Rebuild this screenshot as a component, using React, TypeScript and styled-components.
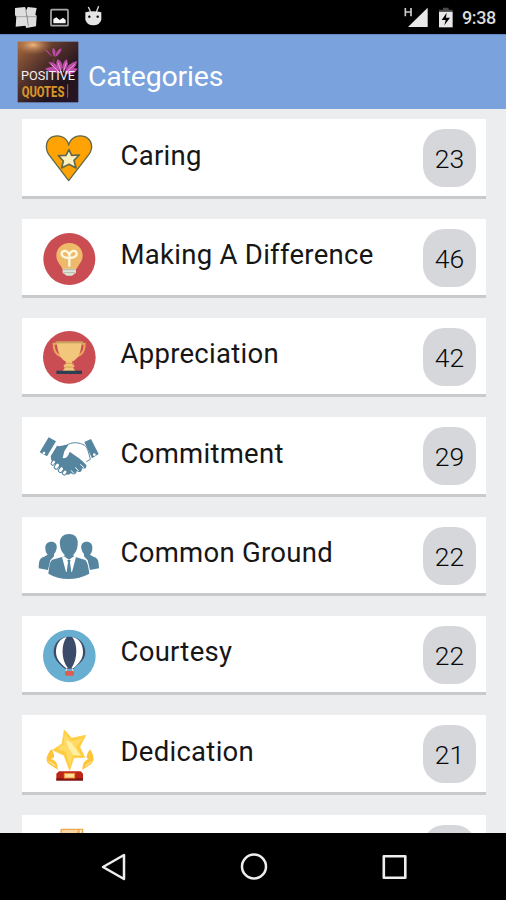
import React from "react";
import styled, { createGlobalStyle } from "styled-components";

const Global = createGlobalStyle`
  * { box-sizing: border-box; }
  body { margin: 0; background: #000; overflow: hidden; font-family: Roboto, "Liberation Sans", sans-serif; }
`;

const Screen = styled.div`
  width: 506px;
  height: 900px;
  display: flex;
  flex-direction: column;
  overflow: hidden;
`;

const StatusBar = styled.div`
  height: 34px;
  flex: none;
  display: flex;
  justify-content: space-between;
  background: #000;
`;

const StatusClock = styled.div`
  display: flex;
  width: 116px;
  color: #dcdcdc;
`;

const Clock = styled.span`
  font-size: 18px;
  font-weight: 500;
  line-height: 36px;
  margin-left: 5px;
  letter-spacing: -0.4px;
  white-space: nowrap;
`;

const Header = styled.header`
  height: 75px;
  flex: none;
  display: flex;
  align-items: flex-start;
  background: #7aa2dc;
  border-top: 1px solid #6287c4;
  padding: 6px 0 0 17px;
`;

const Title = styled.h1`
  margin: 18px 0 0 9px;
  color: #fff;
  font-size: 28.5px;
  font-weight: 400;
  line-height: 36px;
  letter-spacing: -0.2px;
`;

const List = styled.main`
  height: 724px;
  flex: none;
  overflow: hidden;
  display: flex;
  flex-direction: column;
  gap: 20px;
  padding: 10.3px 20px 0 21.5px;
  background: #ebedef;
`;

const Card = styled.article`
  height: 79.33px;
  flex: none;
  display: flex;
  align-items: flex-start;
  background: #fff;
  border-bottom: 3px solid #c9cacc;
  padding-right: 10px;
`;

const IconArt = styled.svg`
  width: 80px;
  height: 76px;
  flex: none;
  margin-left: 8.5px;
`;

const Label = styled.span`
  flex: 1;
  margin: 18.5px 0 0 10.5px;
  font-size: 27.5px;
  font-weight: 400;
  line-height: 36px;
  letter-spacing: 0.28px;
  color: #161616;
  white-space: nowrap;
`;

const Count = styled.span`
  width: 53px;
  height: 58px;
  margin-top: 10px;
  border-radius: 21px;
  background: #d5d7da;
  color: #08090a;
  font-size: 26.5px;
  font-weight: 300;
  line-height: 60px;
  text-align: center;
`;

const NavBar = styled.nav`
  height: 67px;
  flex: none;
  background: #000;
  display: flex;
  justify-content: space-between;
  align-items: flex-start;
  padding: 18px 96px 0 97px;
`;

const steel = "#55859f";

const Heart = () => (
  <g stroke="#5f6a4c" strokeWidth="4" strokeLinejoin="round">
    <path d="M161 198 L101 119 C88 98 94 71 116 65 C139 59 157 72 161 91 C167 70 188 58 210 66 C231 76 236 99 222 119 Z" fill="#ffa305" />
    <path d="M162 105 L170 122 L193 121 L177 137 L183 160 L162 149 L140 160 L145 139 L130 123 L153 122 Z" fill="#fff0c2" strokeWidth="5" />
  </g>
);

const Bulb = () => (
  <g>
    <circle cx="118" cy="116" r="78" fill="#c94d52" />
    <path d="M98 139h40v18l-12 9h-16l-12-9z" fill="#dce4d8" />
    <path d="M98 148h40M101 157h34" stroke="#b8b9a5" strokeWidth="3" />
    <path d="M118 68c24 0 40 17 40 38 0 17-11 24-18 39H97c-7-15-18-22-18-39 0-21 16-38 39-38z" fill="#efb96a" />
    <path d="M118 139v-28c-7 3-23 0-23-11 0-12 21-12 23 7 2-19 22-19 22-7 0 11-16 14-22 11" stroke="#fff8df" strokeWidth="7" fill="none" />
  </g>
);

const Trophy = () => (
  <g>
    <circle cx="118" cy="112" r="79" fill="#c94d52" />
    <path d="M82 71H71c0 22 8 36 29 39M152 71h12c0 22-9 36-29 39" fill="none" stroke="#e7a65c" strokeWidth="6" />
    <path d="M80 65h75c-1 29-9 52-29 60v8c9 0 9 9 3 10l8 11H97l8-11c-6-2-6-9 3-10v-8C90 116 82 94 80 65z" fill="#f3c77b" />
    <path d="M77 64h82v6H77z" fill="#c7a05d" />
    <path d="M105 130h26M105 141h26" stroke="#d99a51" strokeWidth="3" />
    <path d="M79 152h77v10H79z" fill="#2e3e53" />
  </g>
);

const Handshake = () => (
  <g fill={steel}>
    <path d="M56 53l22 12-27 45-22-12z" />
    <path d="M163 67l20-9 23 45-20 13z" />
    <circle cx="42" cy="100" r="4" fill="#fff" />
    <circle cx="193" cy="105" r="4" fill="#fff" />
    <path d="M81 78c12 5 22-5 34-2l-12 19-5 20c12 3 17-8 21-19 19 13 37 24 49 39 5 9-5 15-13 10 4 11-8 16-15 9 0 10-11 14-17 6-5 7-17 7-21-2L64 122l-2-12z" />
    <path d="M108 78c18-13 40-10 56-1 9 7 13 25 17 42l-12 7" fill="none" stroke={steel} strokeWidth="3" />
    <path d="M136 143l10 11M123 152l9 10M151 134l11 10" stroke="#fff" strokeWidth="3" />
    <g fill="#fff" stroke={steel} strokeWidth="3">
      <rect x="65" y="121" width="10" height="16" rx="5" transform="rotate(35 70 129)" />
      <rect x="75" y="130" width="12" height="19" rx="6" transform="rotate(35 81 139)" />
      <rect x="87" y="141" width="12" height="18" rx="6" transform="rotate(35 93 150)" />
      <rect x="99" y="151" width="11" height="15" rx="5" transform="rotate(35 104 158)" />
    </g>
  </g>
);

const People = () => (
  <g fill={steel}>
    <path d="M64 64c11 0 18 8 16 20-1 8-5 14-8 17v7l-11 12-7 29-28-5c1-20 1-30 15-34l12-7c-5-5-7-11-7-20-1-11 7-19 18-19z" />
    <path d="M170 64c-11 0-18 8-16 20 1 8 5 14 8 17v7l11 12 7 29 27-5c-1-20-1-30-15-34l-12-7c5-5 7-11 7-20 1-11-6-19-17-19z" />
    <path d="M117 41c19 0 29 14 26 33-1 14-7 23-14 31l8 5 29 9c8 9 10 26 12 41-38 21-88 21-123 0 3-18 2-34 12-42l29-8 9-5c-8-8-14-17-15-31-3-19 8-33 27-33z" />
    <path d="M101 107l-5 3 12 45h18l12-45-5-3-16 11z" fill="#fff" />
    <path d="M112 119h10l-2 7 4 29h-14l4-29z" />
  </g>
);

const Balloon = () => (
  <g>
    <circle cx="118" cy="123" r="79" fill="#67aed1" />
    <path d="M118 65c28 0 48 18 48 47 0 22-19 35-35 49h-26c-18-14-34-28-34-50 0-28 18-46 47-46z" fill="#3c4b69" />
    <path d="M110 66C88 70 78 90 78 112c0 20 15 36 30 47l6 1C92 132 94 86 110 66zM127 66c22 4 32 24 32 46 0 20-14 36-28 47l-7 1c20-28 19-74 3-94z" fill="#fff" />
    <path d="M110 160l-2 9M127 160l2 9" stroke="#e2e8ed" strokeWidth="3" />
    <rect x="105" y="168" width="27" height="14" rx="4" fill="#df5d50" />
  </g>
);

const StarAward = () => (
  <g>
    <path d="M63 104c-12 18-19 32-7 43l27 18c0-17-4-28-21-33 12 0 14-7 4-27z" fill="#ffc43a" />
    <path d="M180 104c13 18 13 31 5 43l-28 18c1-16 3-27 20-33-10 0-10-9 3-28z" fill="#ffc43a" />
    <path d="M56 140l20 13M185 141l-20 13" stroke="#ffe588" strokeWidth="4" />
    <path d="M103 46l22 25 42-9-18 35 15 31-33 1-12 38-17-45-34-16 28-18z" fill="#ffcc3d" stroke="#ffd45a" strokeWidth="3" />
    <path d="M105 55l19 24 35-9-20 27 17 27-27-1-10 31-12-42-27-10 20-13z" fill="#ffda65" />
    <path d="M107 76l17 8 27 38-21-1-13-19z" fill="#fff0a5" />
    <path d="M87 170h65l7 7v20H79v-20z" fill="#bd2418" />
    <path d="M79 191h80v7H79z" fill="#7d1513" />
    <rect x="103" y="176" width="31" height="14" fill="#ffe19b" stroke="#f38b35" strokeWidth="3" />
  </g>
);

const OrangeBook = () => (
  <g>
    <path d="M182 145h68v30h-70z" fill="#eda64e" />
    <path d="M186 149h49l-5 12h-45z" fill="#f8d5a1" />
    <path d="M239 149l7-1-2 12h-5z" fill="#fff0d2" />
  </g>
);

const categories = [
  { name: "Caring", count: 23, view: "45 13 240 228", Art: Heart },
  { name: "Making A Difference", count: 46, view: "0 -4 240 228", Art: Bulb },
  { name: "Appreciation", count: 42, view: "0 -6 240 228", Art: Trophy },
  { name: "Commitment", count: 29, view: "0 -8 240 228", Art: Handshake },
  { name: "Common Ground", count: 22, view: "0 -10 240 228", Art: People },
  { name: "Courtesy", count: 22, view: "0 3 240 228", Art: Balloon },
  { name: "Dedication", count: 21, view: "0 1 240 228", Art: StarAward },
  { name: "", count: null, view: "90 104 240 228", Art: OrangeBook },
];

const AppLogo = () => (
  <svg width="62" height="62" viewBox="0 0 186 186">
    <defs>
      <linearGradient id="dusk" x2="1" y2="1">
        <stop stopColor="#a76a3c" />
        <stop offset=".4" stopColor="#51302b" />
        <stop offset=".7" stopColor="#21131c" />
        <stop offset="1" stopColor="#281527" />
      </linearGradient>
      <radialGradient id="glow">
        <stop stopColor="#f0b77d" />
        <stop offset="1" stopColor="#ad7047" stopOpacity="0" />
      </radialGradient>
    </defs>
    <rect x="2" y="2" width="182" height="182" fill="url(#dusk)" />
    <ellipse cx="48" cy="12" rx="58" ry="30" fill="url(#glow)" />
    <path d="M112 52l-7 30" stroke="#6b3d3c" strokeWidth="4" />
    <g fill="#bd4ba9">
      <path d="M107 49Q92 36 83 25Q91 25 107 49M111 48Q102 27 109 20Q121 32 111 48M114 48Q119 25 134 22Q131 40 114 48" />
      <path d="M130 91Q103 78 94 63Q119 62 130 91M132 91Q111 69 122 54Q144 66 132 91M138 91Q132 70 148 54Q161 73 138 91M143 93Q152 66 180 60Q179 87 143 93M130 95Q98 97 84 83Q112 69 130 95M142 97Q160 75 182 83Q172 104 142 97" />
    </g>
    <path d="M103 70l27 27M123 65l10 29M148 65l-9 29M173 70l-28 26" stroke="#eb9bd6" strokeWidth="3" />
    <text x="12" y="118" fill="#f5eff3" fontFamily="Roboto" fontSize="41" textLength="162" lengthAdjust="spacingAndGlyphs">POSITIVE</text>
    <text x="14" y="168" fill="#d79527" fontFamily="Roboto" fontWeight="800" fontSize="44" textLength="128" lengthAdjust="spacingAndGlyphs">QUOTES</text>
    <path d="M152 130v40" stroke="#a46c20" strokeWidth="3" />
  </svg>
);

export default function App() {
  return (
    <Screen>
      <Global />
      <StatusBar>
        <svg width="130" height="34" viewBox="0 0 390 102">
          <path d="M45 24l30-3 4 10 4-10 27 3-4 20 4 3-2 32-29 5-3-7-29 3 2-31-4-3z" fill="#dedede" />
          <path d="M76 25l6 27 3 27M47 50h62" stroke="#999" strokeWidth="2.5" />
          <rect x="153" y="29" width="51" height="48" rx="3" fill="none" stroke="#aaa" strokeWidth="5" />
          <path d="M160 70V57l9-5 10 8 10-7 8 7v10h-37z" fill="#f5f5f5" />
          <path d="M265 21l7 15M296 19l-7 17" stroke="#ddd" strokeWidth="4" />
          <path d="M256 37q24-7 48 0v22q-5 17-24 17t-24-17z" fill="#e5e5e5" />
          <circle cx="268" cy="50" r="3.5" /><circle cx="293" cy="50" r="3.5" />
        </svg>
        <StatusClock>
          <svg width="67" height="34" viewBox="0 0 201 102">
            <path d="M46 24v25M63 24v25M46 36h17" stroke="#ccc" strokeWidth="5" />
            <path d="M113 23v58H54z" fill="#e8e8e8" />
            <path d="M147 34v-5h12v-6h17v6h12v5z" fill="#494949" />
            <path d="M147 35h41v47h-41z" fill="#e8e8e8" />
            <path d="M170 38l-15 22h12l-4 16 17-23h-12z" fill="#000" />
          </svg>
          <Clock>9:38</Clock>
        </StatusClock>
      </StatusBar>
      <Header>
        <AppLogo />
        <Title>Categories</Title>
      </Header>
      <List>
        {categories.map(({ name, count, view, Art }) => (
          <Card key={name}>
            <IconArt viewBox={view}><Art /></IconArt>
            <Label>{name}</Label>
            <Count>{count}</Count>
          </Card>
        ))}
      </List>
      <NavBar>
        <svg width="32" height="32" viewBox="0 0 32 32" fill="none" stroke="#eee" strokeWidth="2.5" strokeLinejoin="round">
          <path d="M27 4v24L6 16z" />
        </svg>
        <svg width="32" height="32" viewBox="0 0 32 32" fill="none" stroke="#eee" strokeWidth="2.5">
          <circle cx="16" cy="15.5" r="12" />
        </svg>
        <svg width="32" height="32" viewBox="0 0 32 32" fill="none" stroke="#eee" strokeWidth="2.6" strokeLinejoin="round">
          <rect x="5.8" y="5.3" width="21.5" height="21.5" />
        </svg>
      </NavBar>
    </Screen>
  );
}
